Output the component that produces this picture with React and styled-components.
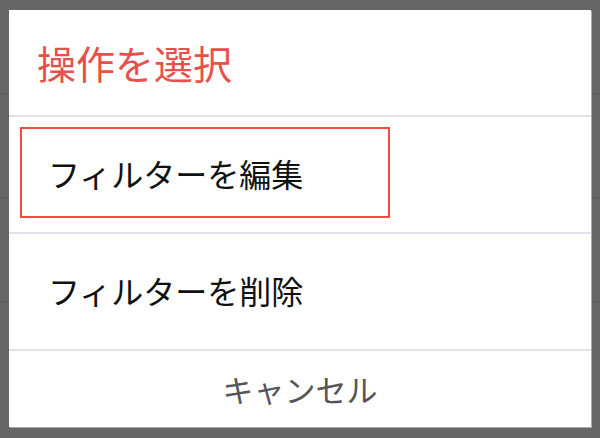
import styled, { createGlobalStyle } from "styled-components";

const GlobalStyle = createGlobalStyle`
  html, body {
    margin: 0;
    padding: 0;
    background: #666666;
  }
  body {
    font-family: "Noto Sans CJK JP", "Noto Sans", sans-serif;
  }
`;

const Screen = styled.div`
  position: relative;
  width: 600px;
  height: 438px;
  overflow: hidden;
  background: #666666;
`;

// 뒤에 깔린 리스트 (어둡게 보이는 부분)
const BackList = styled.div`
  display: flex;
  flex-direction: column;
`;

const BackRow = styled.div`
  height: ${(p) => p.h}px;
  border-bottom: 1px solid #5d5d5d;
`;

const Overlay = styled.div`
  position: absolute;
  inset: 0;
  display: flex;
  justify-content: center;
  align-items: flex-start;
  padding-top: 10px;
`;

const Dialog = styled.div`
  width: 582px;
  height: 417px;
  background: #ffffff;
  display: flex;
  flex-direction: column;
  box-shadow: 1px 1px 0 #a8a8a8;
`;

const Header = styled.div`
  height: 107px;
  display: flex;
  align-items: center;
  padding-left: 28px;
  border-bottom: 2px solid #dfe2e8;
  box-sizing: border-box;
`;

const Title = styled.h2`
  margin: 0;
  font-size: 39px;
  font-weight: 400;
  color: #e8514b;
  line-height: 1;
`;

const Item = styled.div`
  height: 117px;
  display: flex;
  align-items: center;
  border-bottom: 2px solid #dfe2e8;
  box-sizing: border-box;
  padding-left: 11px;
`;

const ItemInner = styled.div`
  width: 370px;
  height: 91px;
  box-sizing: border-box;
  display: flex;
  align-items: center;
  padding-left: ${(p) => (p.focused ? 26 : 28)}px;
  border: ${(p) => (p.focused ? "2px solid #f24b41" : "none")};
  margin-top: -4px;
`;

const ItemLabel = styled.span`
  font-size: 32px;
  color: #111111;
  line-height: 1;
`;

const Cancel = styled.div`
  flex: 1;
  display: flex;
  align-items: center;
  justify-content: center;
  font-size: 31px;
  color: #555555;
  padding-bottom: 2px;
`;

const items = [
  { label: "フィルターを編集", focused: true },
  { label: "フィルターを削除", focused: false },
];

const App = () => {
  return (
    <>
      <GlobalStyle />
      <Screen>
        <BackList>
          <BackRow h={93} />
          <BackRow h={103} />
          <BackRow h={103} />
        </BackList>
        <Overlay>
          <Dialog>
            <Header>
              <Title>操作を選択</Title>
            </Header>
            {items.map((it) => (
              <Item key={it.label}>
                <ItemInner focused={it.focused}>
                  <ItemLabel>{it.label}</ItemLabel>
                </ItemInner>
              </Item>
            ))}
            <Cancel>キャンセル</Cancel>
          </Dialog>
        </Overlay>
      </Screen>
    </>
  );
};

export default App;
